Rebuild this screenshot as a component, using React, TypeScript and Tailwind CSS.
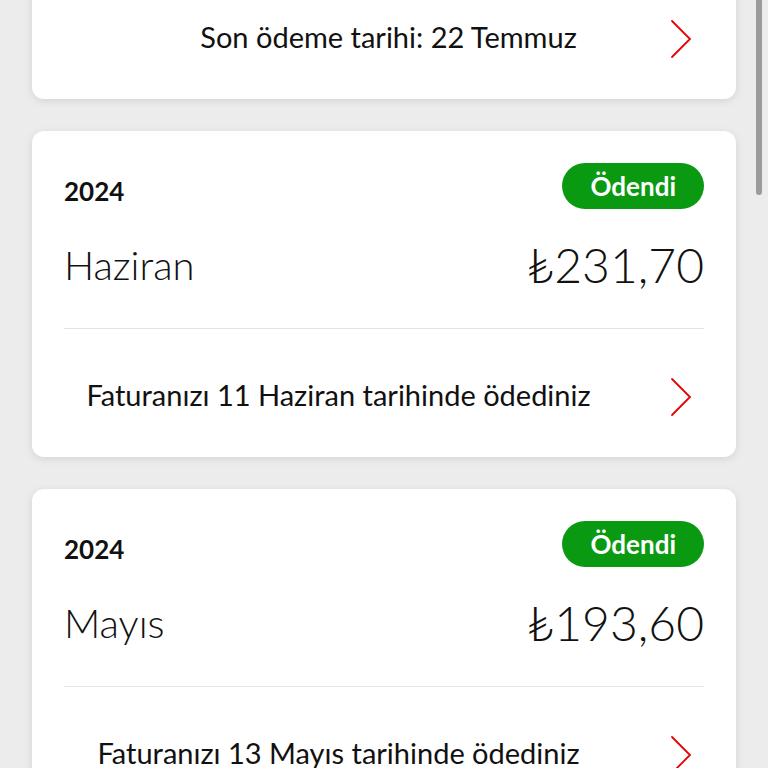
import React from "react"

interface Bill {
  year?: string
  month?: string
  amount?: string
  status?: string
  note: string
  noteShift: string
}

const bills: Bill[] = [
  // ilk kart yukarı kaydırılmış, sadece alt satırı görünüyor
  { note: "Son ödeme tarihi: 22 Temmuz", noteShift: "pl-[100px]" },
  { year: "2024", month: "Haziran", amount: "₺231,70", status: "Ödendi", note: "Faturanızı 11 Haziran tarihinde ödediniz", noteShift: "pl-0" },
  { year: "2024", month: "Mayıs", amount: "₺193,60", status: "Ödendi", note: "Faturanızı 13 Mayıs tarihinde ödediniz", noteShift: "pl-0" },
]

function Chevron() {
  return (
    <svg width="24" height="40" viewBox="0 0 24 40" fill="none" className="shrink-0">
      <path d="M3 2 L21 20 L3 38" stroke="#e60000" strokeWidth="1.8" strokeLinecap="round" strokeLinejoin="miter" />
    </svg>
  )
}

function BillCard({ bill }: { bill: Bill }) {
  return (
    <div className={`bg-white rounded-xl shadow-[0_2px_8px_rgba(0,0,0,0.10)] px-8 ${bill.year ? "pt-8" : ""}`}>
      {bill.year && (
        <>
          <div className="flex items-end justify-between h-[46px]">
            <span className="text-[26px] font-bold leading-none text-[#111] pb-[5px]">{bill.year}</span>
            <span className="h-[46px] px-[28px] rounded-full bg-[#0a9a12] text-white text-[26px] font-bold flex items-center leading-none">
              {bill.status}
            </span>
          </div>
          <div className="flex items-center justify-between mt-[31px] h-[50px]">
            <span className="text-[40px] font-light text-[#111] leading-none">{bill.month}</span>
            <span className="text-[48px] font-light text-[#111] leading-none">{bill.amount}</span>
          </div>
          <div className="h-px bg-[#e4e4e4] mt-[38px]" />
        </>
      )}
      <div className="flex items-center h-[128px] pt-[3px]">
        <div className={`flex-1 text-center text-[29px] text-[#111] pr-[56px] ${bill.noteShift}`}>{bill.note}</div>
        <div className="pr-[11px] pt-[4px]">
          <Chevron />
        </div>
      </div>
    </div>
  )
}

export default function App() {
  return (
    <div className="relative w-[768px] h-[768px] overflow-hidden bg-[#ececec]" style={{ fontFamily: "Lato, 'Noto Sans', sans-serif" }}>
      <div className="flex flex-col gap-8 px-8 -mt-[29px]">
        {bills.map((b, i) => (
          <BillCard key={i} bill={b} />
        ))}
      </div>
      <div className="absolute top-0 right-[6px] w-[6px] h-[195px] rounded-b-full bg-[#9b9b9b]" />
    </div>
  )
}
